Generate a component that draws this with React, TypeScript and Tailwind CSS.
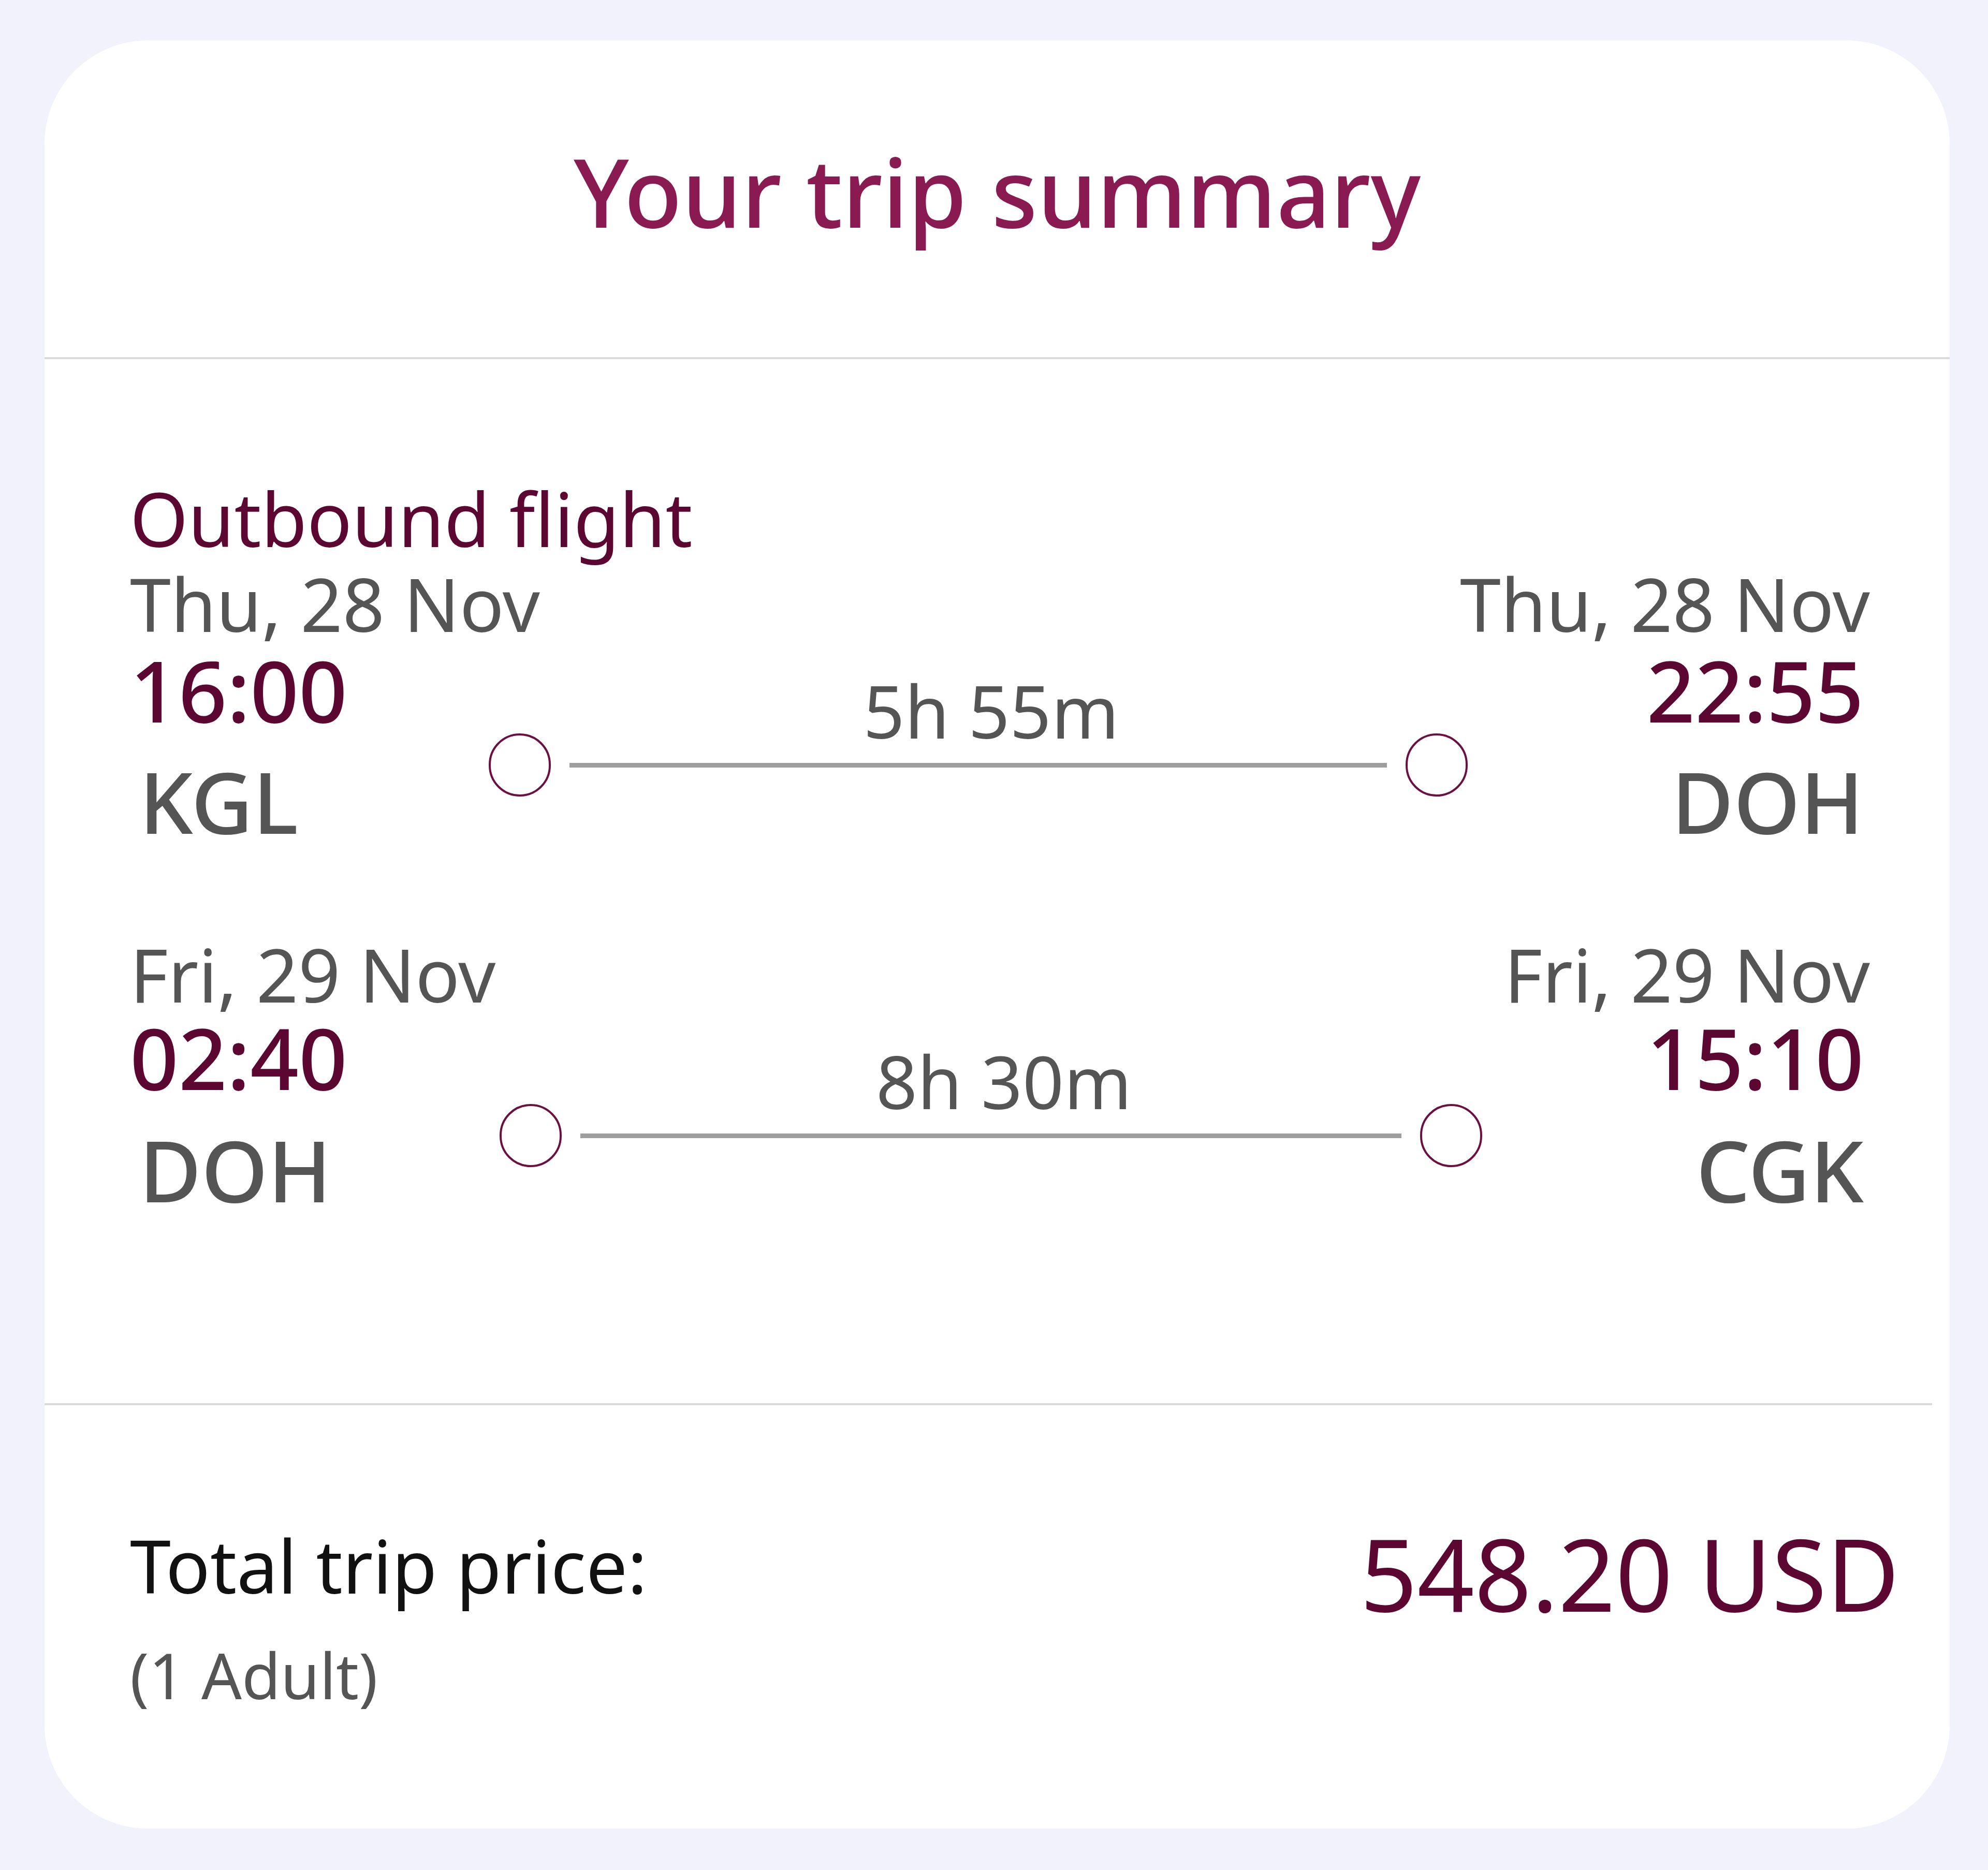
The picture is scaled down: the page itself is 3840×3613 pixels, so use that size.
import React from "react";

type Segment = {
  departDate: string;
  departTime: string;
  from: string;
  duration: string;
  arriveDate: string;
  arriveTime: string;
  to: string;
  wrapClass: string;
  rowClass: string;
  leftClass: string;
  middleClass: string;
  codeClass: string;
};

const segments: Segment[] = [
  {
    departDate: "Thu, 28 Nov",
    departTime: "16:00",
    from: "KGL",
    duration: "5h 55m",
    arriveDate: "Thu, 28 Nov",
    arriveTime: "22:55",
    to: "DOH",
    wrapClass: "mt-[22px]",
    rowClass: "mt-[14px]",
    leftClass: "w-[693px]",
    middleClass: "w-[1891px] pt-[67px]",
    codeClass: "mt-[51px]",
  },
  {
    departDate: "Fri, 29 Nov",
    departTime: "02:40",
    from: "DOH",
    duration: "8h 30m",
    arriveDate: "Fri, 29 Nov",
    arriveTime: "15:10",
    to: "CGK",
    wrapClass: "mt-[181px]",
    rowClass: "mt-[8px]",
    leftClass: "w-[714px]",
    middleClass: "w-[1898px] pt-[73px]",
    codeClass: "mt-[53px]",
  },
];

function Stop() {
  return (
    <span className="h-[122px] w-[120px] shrink-0 rounded-full border-[4px] border-[#6b1040] bg-white" />
  );
}

function FlightSegment({ segment }: { segment: Segment }) {
  return (
    <div className={segment.wrapClass}>
      <div className="flex justify-between text-[142px] leading-none text-[#555555]">
        <p>{segment.departDate}</p>
        <p>{segment.arriveDate}</p>
      </div>

      <div className={`flex ${segment.rowClass}`}>
        <div className={segment.leftClass}>
          <p className="text-[164px] font-medium leading-none text-[#5c0632]">
            {segment.departTime}
          </p>
          <p
            className={`pl-[18px] text-[164px] font-medium leading-none text-[#555555] ${segment.codeClass}`}
          >
            {segment.from}
          </p>
        </div>

        <div className={segment.middleClass}>
          <p className="pl-[50px] text-center text-[140px] leading-[110px] text-[#555555]">
            {segment.duration}
          </p>
          <div className="-mt-[11px] flex items-center gap-[36px]">
            <Stop />
            <span className="h-[9px] flex-1 bg-[#9e9e9e]" />
            <Stop />
          </div>
        </div>

        <div className="flex-1 pr-[12px] text-right">
          <p className="text-[164px] font-medium leading-none text-[#5c0632]">
            {segment.arriveTime}
          </p>
          <p
            className={`text-[164px] font-medium leading-none text-[#555555] ${segment.codeClass}`}
          >
            {segment.to}
          </p>
        </div>
      </div>
    </div>
  );
}

export default function App() {
  return (
    <div
      className="min-h-[3613px] bg-[#f1f2fb] pl-[86px] pt-[78px]"
      style={{ fontFamily: '"Noto Sans", "Open Sans", sans-serif' }}
    >
      <div className="h-[3455px] w-[3680px] overflow-hidden rounded-[200px] bg-white">
        {/* header */}
        <div className="flex h-[616px] items-center justify-center border-b-[4px] border-[#dadada] pb-[30px]">
          <h1 className="text-[183px] font-medium leading-none text-[#8a1b52]">
            Your trip summary
          </h1>
        </div>

        {/* flights */}
        <div className="pb-[369px] pl-[165px] pr-[154px] pt-[235px]">
          <p className="text-[144px] leading-none text-[#5c0632]">Outbound flight</p>
          {segments.map((segment) => (
            <FlightSegment key={segment.departTime} segment={segment} />
          ))}
        </div>

        <div className="mr-[34px] h-[4px] bg-[#dadada]" />

        {/* price */}
        <div className="flex items-start justify-between pl-[165px] pr-[97px] pt-[238px]">
          <div>
            <p className="text-[142px] leading-none text-[#111111]">Total trip price:</p>
            <p className="mt-[80px] text-[122px] leading-none text-[#555555]">(1 Adult)</p>
          </div>
          <p className="-mt-[10px] text-[193px] leading-none text-[#5c0632]">548.20 USD</p>
        </div>
      </div>
    </div>
  );
}
